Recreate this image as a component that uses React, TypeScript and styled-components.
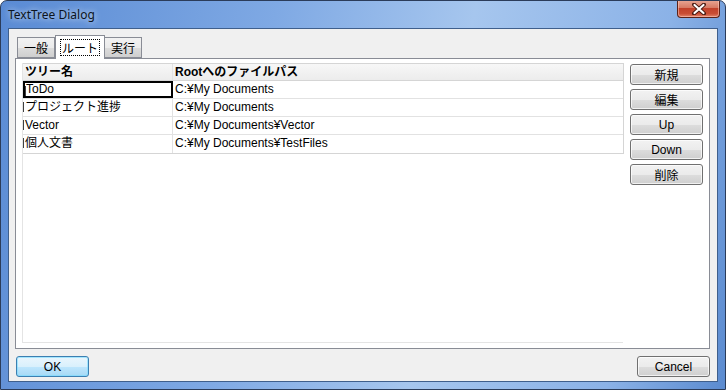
import React from 'react'
import styled, { createGlobalStyle } from 'styled-components'

const GlobalStyle = createGlobalStyle`
  html, body { margin: 0; padding: 0; background: #ffffff; }
  body { font-family: "Liberation Sans", "Noto Sans CJK JP", sans-serif; }
`

// window frame (aero glass)
const Window = styled.div`
  width: 726px;
  height: 390px;
  box-sizing: border-box;
  border: 1px solid #2b3c5a;
  border-radius: 7px 7px 0 0;
  background: linear-gradient(100deg, #5a8bd4 0%, #7fa9e4 35%, #a6c6ee 60%, #8bb2e7 85%, #5b8bd0 100%);
  display: flex;
  flex-direction: column;
  overflow: hidden;
`

const TitleBar = styled.div`
  height: 27px;
  display: flex;
  align-items: flex-start;
  justify-content: space-between;
  padding-left: 7px;
  box-sizing: border-box;
`

const Title = styled.div`
  font-family: "Noto Sans", sans-serif;
  font-size: 12px;
  color: #0c1420;
  margin-top: 5px;
  text-shadow: 0 0 6px rgba(255, 255, 255, 0.9);
`

const CloseButton = styled.div`
  width: 43px;
  height: 18px;
  margin-right: 5px;
  margin-top: -1px;
  box-sizing: border-box;
  border: 1px solid #5b2219;
  border-top: none;
  border-radius: 0 0 4px 4px;
  background: linear-gradient(#e9a896 0%, #d77a64 45%, #c2412a 50%, #c94d34 80%, #e2846b 100%);
  box-shadow: inset 0 0 0 1px rgba(255, 210, 200, 0.5);
  display: flex;
  align-items: center;
  justify-content: center;
`

const Client = styled.div`
  flex: 1;
  margin: 0 7px 7px 7px;
  border: 1px solid #3f5f8c;
  background: #f0f0f0;
  display: flex;
  flex-direction: column;
  padding: 5px 8px 0 6px;
`

const TabStrip = styled.div`
  display: flex;
  align-items: flex-end;
  height: 24px;
  padding-left: 2px;
  position: relative;
  z-index: 1;
`

const Tab = styled.div<{ active?: boolean }>`
  box-sizing: border-box;
  height: ${p => (p.active ? 24 : 21)}px;
  margin-bottom: ${p => (p.active ? -1 : 0)}px;
  padding: 0 ${p => (p.active ? 5 : 6)}px;
  border: 1px solid #898c95;
  border-bottom: ${p => (p.active ? 'none' : '1px solid #898c95')};
  border-left: ${p => (p.active ? '1px solid #898c95' : 'none')};
  background: ${p => (p.active ? '#ffffff' : 'linear-gradient(#f2f2f2, #ebebeb 50%, #dddddd 51%, #cfcfcf)')};
  font-family: "Noto Sans CJK JP", sans-serif;
  font-size: 12px;
  line-height: 18px;
  color: #000;
  display: flex;
  align-items: center;
  &:first-child { border-left: 1px solid #898c95; }
`

const FocusLabel = styled.span`
  outline: 1px dotted #000;
  padding: 0 1px;
  line-height: 15px;
`

const Panel = styled.div`
  width: 695px;
  height: 291px;
  box-sizing: border-box;
  border: 1px solid #898c95;
  background: #ffffff;
  display: flex;
  padding: 4px 0 0 6px;
`

const ListView = styled.div`
  width: 601px;
  height: 280px;
  box-sizing: border-box;
  border-left: 1px solid #e4e4e4;
  border-bottom: 1px solid #e4e4e4;
`

const Grid = styled.div`
  width: 601px;
  box-sizing: border-box;
  border: 1px solid #d5d5d5;
  border-left: none;
`

const Row = styled.div<{ header?: boolean }>`
  display: grid;
  grid-template-columns: 150px 1fr;
  height: ${p => (p.header ? 17 : 18)}px;
  box-sizing: border-box;
  border-bottom: 1px solid ${p => (p.header ? '#d5d5d5' : '#e2e2e2')};
  background: ${p => (p.header ? 'linear-gradient(#f7f7f7, #ececec)' : '#ffffff')};
  &:last-child { border-bottom: none; }
`

// the row edge shows clipped fragments of a hidden column
const Cell = styled.div<{ header?: boolean; focused?: boolean; first?: boolean }>`
  box-sizing: border-box;
  font-size: 12px;
  font-weight: ${p => (p.header ? 'bold' : 'normal')};
  color: #000;
  line-height: 16px;
  padding-left: ${p => (p.focused ? 1 : 2)}px;
  white-space: nowrap;
  overflow: hidden;
  border-right: ${p => (p.first ? '1px solid #e2e2e2' : 'none')};
  background: ${p =>
    p.first && !p.header
      ? 'linear-gradient(#fff 0 3px, #404040 3px 13px, #fff 13px) left / 1px 100% no-repeat'
      : 'none'};
  ${p => p.focused && 'border: 2px solid #000; line-height: 13px;'}
`

const ButtonColumn = styled.div`
  display: flex;
  flex-direction: column;
  gap: 4px;
  margin-left: 7px;
  margin-top: 1px;
`

const Button = styled.div<{ primary?: boolean }>`
  width: 73px;
  height: 21px;
  box-sizing: border-box;
  border: 1px solid ${p => (p.primary ? '#3c7fb1' : '#707070')};
  border-radius: 3px;
  background: ${p =>
    p.primary
      ? 'linear-gradient(#eaf6fd, #d9f0fc 50%, #bee6fd 51%, #a7d9f5)'
      : 'linear-gradient(#f2f2f2, #ebebeb 50%, #dddddd 51%, #cfcfcf)'};
  box-shadow: inset 0 0 0 1px ${p => (p.primary ? 'rgba(120,220,255,0.6)' : 'rgba(255,255,255,0.7)')};
  font-family: "Noto Sans CJK JP", sans-serif;
  font-size: 12px;
  color: #000;
  display: flex;
  align-items: center;
  justify-content: center;
`

const LatinLabel = styled.span`
  font-family: "Liberation Sans", sans-serif;
`

const Footer = styled.div`
  display: flex;
  justify-content: space-between;
  margin-top: 7px;
  width: 695px;
  padding-left: 1px;
  box-sizing: border-box;
`

const rows = [
  { name: 'ToDo', path: 'C:¥My Documents' },
  { name: 'プロジェクト進捗', path: 'C:¥My Documents' },
  { name: 'Vector', path: 'C:¥My Documents¥Vector' },
  { name: '個人文書', path: 'C:¥My Documents¥TestFiles' },
]

const sideButtons = ['新規', '編集', 'Up', 'Down', '削除']

export default function App() {
  return (
    <>
      <GlobalStyle />
      <Window>
        <TitleBar>
          <Title>TextTree Dialog</Title>
          <CloseButton>
            <svg width="14" height="12" viewBox="0 0 14 12">
              <path d="M2 1.5 L12 10.5 M12 1.5 L2 10.5" stroke="#4a1a12" strokeWidth="4" strokeLinecap="round" />
              <path d="M2.5 2 L11.5 10 M11.5 2 L2.5 10" stroke="#ffffff" strokeWidth="2.2" strokeLinecap="round" />
            </svg>
          </CloseButton>
        </TitleBar>
        <Client>
          <TabStrip>
            <Tab>一般</Tab>
            <Tab active><FocusLabel>ルート</FocusLabel></Tab>
            <Tab>実行</Tab>
          </TabStrip>
          <Panel>
            <ListView>
              <Grid>
                <Row header>
                  <Cell header first>ツリー名</Cell>
                  <Cell header>Rootへのファイルパス</Cell>
                </Row>
                {rows.map((r, i) => (
                  <Row key={i}>
                    <Cell first focused={i === 0}>{r.name}</Cell>
                    <Cell>{r.path}</Cell>
                  </Row>
                ))}
              </Grid>
            </ListView>
            <ButtonColumn>
              {sideButtons.map(b => (
                <Button key={b}>
                  {/^[A-Za-z]+$/.test(b) ? <LatinLabel>{b}</LatinLabel> : b}
                </Button>
              ))}
            </ButtonColumn>
          </Panel>
          <Footer>
            <Button primary><LatinLabel>OK</LatinLabel></Button>
            <Button><LatinLabel>Cancel</LatinLabel></Button>
          </Footer>
        </Client>
      </Window>
    </>
  )
}
